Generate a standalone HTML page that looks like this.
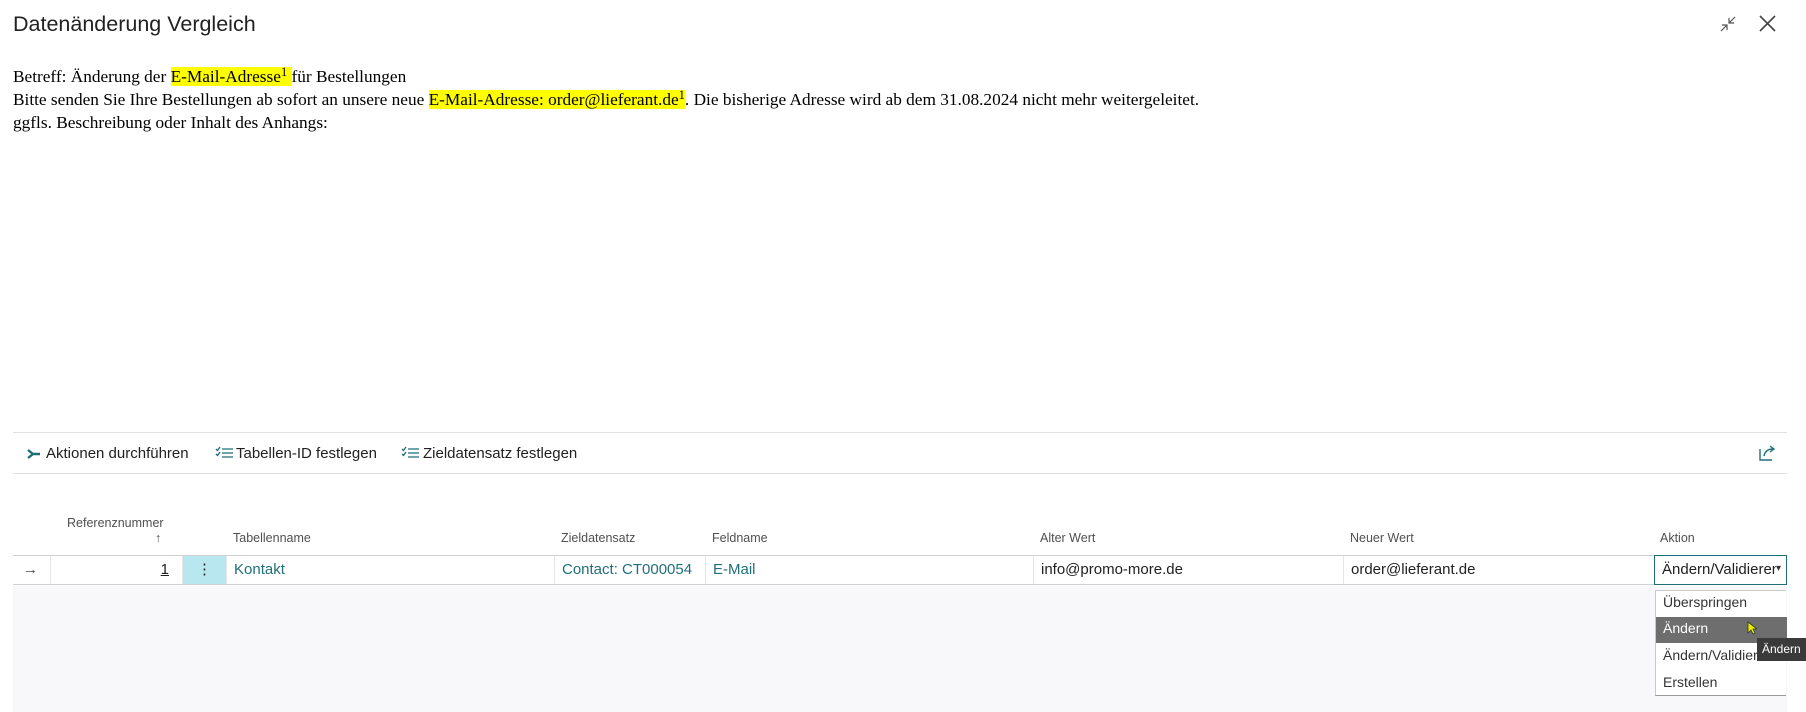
<!DOCTYPE html>
<html><head><meta charset="utf-8"><style>
*{margin:0;padding:0;box-sizing:border-box}
body{width:1806px;height:712px;background:#fff;position:relative;overflow:hidden;font-family:"Liberation Sans",sans-serif;color:#212121}
.abs{position:absolute;white-space:nowrap}
.title{left:13px;top:12px;font-size:21.5px;color:#212121}
.mail{left:13px;top:65px;font-family:"Liberation Serif",serif;font-size:17.3px;line-height:23px;color:#000}
.hl{background:#ffff00}
sup{font-size:12.5px;vertical-align:6px;line-height:0}
.line{position:absolute;left:13px;width:1774px;height:1px;background:#e0e0e0}
.tb{top:445px;font-size:15px;color:#212121}
.hd{font-size:12.5px;color:#505050}
.row{position:absolute;left:13px;top:555px;width:1774px;height:30px;border-top:1px solid #d0d0d0;border-bottom:1px solid #d0d0d0;background:#fff}
.cell{position:absolute;top:0;height:28px;border-left:1px solid #e6e6e6;font-size:15px;line-height:28px;padding-left:7px;color:#212121}
.link{color:#1f6f78}
.gray{position:absolute;left:13px;top:586px;width:1774px;height:126px;background:#f8f8fa}
.dd{position:absolute;left:1655px;top:590px;width:131px;height:106px;background:#fff;border:1px solid #c8c8c8;border-right:none;border-bottom:1px solid #999}
.it{position:absolute;left:7px;font-size:14px;color:#333}
</style></head><body>
<div class="abs title">Datenänderung Vergleich</div>
<svg class="abs" style="left:1719px;top:15px" width="18" height="18" viewBox="0 0 18 18" fill="none" stroke="#555" stroke-width="1.2"><path d="M10 8L16 2M10 3v5h5M8 10L2 16M3 10h5v5"/></svg>
<svg class="abs" style="left:1758px;top:14px" width="19" height="19" viewBox="0 0 19 19" stroke="#444" stroke-width="1.6"><path d="M2 2L17 17M17 2L2 17"/></svg>
<div class="abs mail">Betreff: Änderung der <span class="hl">E-Mail-Adresse<sup>1</sup> </span> für Bestellungen<br>Bitte senden Sie Ihre Bestellungen ab sofort an unsere neue <span class="hl">E-Mail-Adresse: order@lieferant.de<sup>1</sup></span>. Die bisherige Adresse wird ab dem 31.08.2024 nicht mehr weitergeleitet.<br>ggfls. Beschreibung oder Inhalt des Anhangs:</div>
<div class="line" style="top:432px"></div>
<div class="line" style="top:473px"></div>
<svg class="abs" style="left:26px;top:447px" width="16" height="14" viewBox="0 0 16 14"><path d="M2 3l5 4-5 4M7 7h7" stroke="#1f6f78" stroke-width="2.4" fill="none"/></svg>
<div class="abs tb" style="left:46px">Aktionen durchführen</div>
<svg class="abs" style="left:215px;top:446px" width="19" height="14" viewBox="0 0 19 14" stroke="#1f6f78" stroke-width="1.3" fill="none"><path d="M1 3l1.5 1.5L5 1M7 3h11M7 7h11M7 11h11M1 8l1.5 1.5L5 6"/></svg>
<div class="abs tb" style="left:236px">Tabellen-ID festlegen</div>
<svg class="abs" style="left:401px;top:446px" width="19" height="14" viewBox="0 0 19 14" stroke="#1f6f78" stroke-width="1.3" fill="none"><path d="M1 3l1.5 1.5L5 1M7 3h11M7 7h11M7 11h11M1 8l1.5 1.5L5 6"/></svg>
<div class="abs tb" style="left:423px">Zieldatensatz festlegen</div>
<svg class="abs" style="left:1758px;top:444px" width="20" height="18" viewBox="0 0 20 18" stroke="#1f6f78" stroke-width="1.4" fill="none"><path d="M2 5v11h12M6 12c1-5 4-7 9-7M12 2l4 3-4 3"/></svg>
<div class="abs hd" style="left:67px;top:516px">Referenznummer</div>
<div class="abs hd" style="left:155px;top:531px">↑</div>
<div class="abs hd" style="left:233px;top:531px">Tabellenname</div>
<div class="abs hd" style="left:561px;top:531px">Zieldatensatz</div>
<div class="abs hd" style="left:712px;top:531px">Feldname</div>
<div class="abs hd" style="left:1040px;top:531px">Alter Wert</div>
<div class="abs hd" style="left:1350px;top:531px">Neuer Wert</div>
<div class="abs hd" style="left:1660px;top:531px">Aktion</div>
<div class="row">
<div class="cell" style="left:0;width:37px;border:none;color:#444;padding-left:10px">→</div>
<div class="cell" style="left:37px;width:132px;text-align:right;padding-right:13px"><u>1</u></div>
<div class="cell" style="left:169px;width:44px;background:#b9e7ef;text-align:center;padding:0">⋮</div>
<div class="cell link" style="left:213px;width:328px">Kontakt</div>
<div class="cell link" style="left:541px;width:151px">Contact: CT000054</div>
<div class="cell link" style="left:692px;width:328px">E-Mail</div>
<div class="cell" style="left:1020px;width:310px">info@promo-more.de</div>
<div class="cell" style="left:1330px;width:311px">order@lieferant.de</div>
<div class="cell" style="left:1641px;top:-1px;height:30px;width:133px;border:1px solid #1f6f78;background:#fff;line-height:28px;overflow:hidden">Ändern/Validieren</div>
</div>
<div class="abs" style="left:1776px;top:563px;font-size:10px;color:#333;background:#fff">▾</div>
<div class="gray"></div>
<div class="dd">
<div class="it" style="top:3px">Überspringen</div>
<div style="position:absolute;left:0;top:26px;width:131px;height:26px;background:#6e6e6e"></div>
<div class="it" style="top:29px;color:#fff">Ändern</div>
<div class="it" style="top:56px">Ändern/Validieren</div>
<div class="it" style="top:83px">Erstellen</div>
</div>
<svg class="abs" style="left:1747px;top:621px" width="10" height="14" viewBox="0 0 10 14"><path d="M1 1v11l3-3 2 4 2-1-2-4h4z" fill="#e8f000" stroke="#333" stroke-width=".8"/></svg>
<div class="abs" style="left:1757px;top:638px;width:49px;height:23px;background:#3a3a3a;color:#fff;font-size:12px;line-height:23px;padding-left:5px">Ändern</div>
</body></html>
